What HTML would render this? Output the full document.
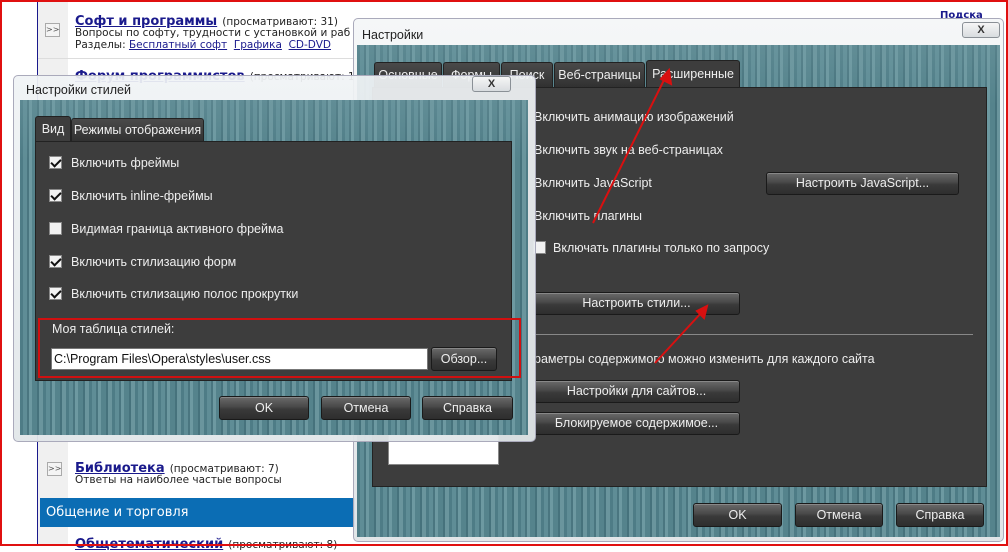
<!DOCTYPE html>
<html><head><meta charset="utf-8"><style>
*{box-sizing:border-box;margin:0;padding:0}
body{width:1008px;height:546px;overflow:hidden;position:relative;background:#fff;font-family:"DejaVu Sans","Liberation Sans",sans-serif;}
.a{position:absolute}
.frame{position:absolute;inset:0;border:2px solid #e01010;z-index:50;pointer-events:none}
.lnk{color:#1a1a8c;text-decoration:underline;font-weight:bold;font-size:13px}
.sm{font-size:10.5px;color:#222}
.arr{width:15px;height:14px;border:1px solid #aaa;background:#f4f4f4;font-size:8px;color:#555;text-align:center;line-height:12px}
.stripe{background:linear-gradient(rgba(120,160,168,.35),rgba(0,0,0,0) 60px),repeating-linear-gradient(90deg,#4e7c86 0 3px,#5f8d96 3px 7px,#4a7680 7px 9px,#6d99a1 9px 12px,#55838c 12px 17px,#46727c 17px 19px,#6a959d 19px 23px)}
.title{background:linear-gradient(#f4f6f7,#dfe4e7);color:#222;font-family:"Liberation Sans",sans-serif;font-size:12.5px}
.dark{background:#3d3d3d;border:1px solid #222}
.t{position:absolute;color:#eee;font-family:"Liberation Sans",sans-serif;font-size:12.5px;white-space:nowrap}
.btn{position:absolute;background:linear-gradient(#6a6a6a,#484848 45%,#3a3a3a 55%,#2e2e2e);border:1px solid #1a1a1a;border-radius:3px;color:#eee;font-family:"Liberation Sans",sans-serif;font-size:12.5px;text-align:center;box-shadow:inset 0 1px 0 #888}
.tab{position:absolute;background:linear-gradient(#4a4a4a,#303030);border:1px solid #222;border-bottom:none;border-radius:3px 3px 0 0;color:#eee;font-family:"Liberation Sans",sans-serif;font-size:12.5px;text-align:center;line-height:24px}
.cb{position:absolute;width:13px;height:13px;background:#f2f2f2;border:1px solid #888}
.cb.k::after{content:"";position:absolute;left:3px;top:0px;width:4px;height:8px;border:solid #111;border-width:0 2px 2px 0;transform:rotate(45deg)}
.x{position:absolute;border:1px solid #8a9096;border-radius:3px;background:linear-gradient(#f6f6f6,#d8dcdf);font-size:11px;font-weight:bold;text-align:center;color:#333;font-family:"Liberation Sans",sans-serif}
</style></head><body>
<div class="a" style="left:37px;top:0;width:1px;height:546px;background:#1a1a8c"></div>
<div class="a" style="left:38px;top:0;width:30px;height:546px;background:#f0f0f0"></div>
<div class="a arr" style="left:45px;top:23px">&gt;&gt;</div>
<div class="a" style="left:75px;top:10px"><span class="lnk">Софт и программы</span> <span class="sm">(просматривают: 31)</span></div>
<div class="a sm" style="left:75px;top:27px">Вопросы по софту, трудности с установкой и раб</div>
<div class="a sm" style="left:75px;top:39px">Разделы: <u style="color:#1a1a8c">Бесплатный софт</u> &nbsp;<u style="color:#1a1a8c">Графика</u> &nbsp;<u style="color:#1a1a8c">CD-DVD</u></div>
<div class="a" style="left:38px;top:58px;width:320px;height:1px;background:#ddd"></div>
<div class="a" style="left:75px;top:65px"><span class="lnk">Форум программистов</span> <span class="sm">(просматривают: 1</span></div>
<div class="a arr" style="left:47px;top:462px">&gt;&gt;</div>
<div class="a" style="left:75px;top:457px"><span class="lnk">Библиотека</span> <span class="sm">(просматривают: 7)</span></div>
<div class="a sm" style="left:75px;top:474px">Ответы на наиболее частые вопросы</div>
<div class="a" style="left:40px;top:498px;width:315px;height:29px;background:#0b6db4;color:#fff;font-size:13px;line-height:29px;padding-left:6px">Общение и торговля</div>
<div class="a" style="left:75px;top:533px"><span class="lnk">Общетематический</span> <span class="sm">(просматривают: 8)</span></div>
<div class="a" style="left:940px;top:10px;font-size:10px;color:#1a1a8c;font-weight:bold">Подска</div>

<div class="a title" style="left:353px;top:18px;width:651px;height:524px;border:1px solid #aab;border-radius:5px;padding:9px 8px;background:linear-gradient(rgba(244,246,247,.9),rgba(223,228,231,.95))">Настройки</div>
<div class="x" style="left:962px;top:22px;width:38px;height:16px;line-height:14px">X</div>
<div class="a stripe" style="left:357px;top:45px;width:643px;height:492px"></div>
<div class="tab" style="left:374px;top:62px;width:68px;height:26px">Основные</div>
<div class="tab" style="left:443px;top:62px;width:57px;height:26px">Формы</div>
<div class="tab" style="left:501px;top:62px;width:52px;height:26px">Поиск</div>
<div class="tab" style="left:554px;top:62px;width:91px;height:26px">Веб-страницы</div>
<div class="tab" style="left:646px;top:60px;width:94px;height:28px;background:#3d3d3d;line-height:26px">Расширенные</div>
<div class="a dark" style="left:372px;top:87px;width:615px;height:400px"></div>
<div class="t" style="left:534px;top:110px">Включить анимацию изображений</div>
<div class="t" style="left:534px;top:143px">Включить звук на веб-страницах</div>
<div class="t" style="left:534px;top:176px">Включить JavaScript</div>
<div class="btn" style="left:766px;top:172px;width:193px;height:23px;line-height:21px">Настроить JavaScript...</div>
<div class="t" style="left:534px;top:209px">Включить плагины</div>
<div class="cb" style="left:533px;top:241px"></div>
<div class="t" style="left:553px;top:241px">Включать плагины только по запросу</div>
<div class="btn" style="left:533px;top:292px;width:207px;height:23px;line-height:21px">Настроить стили...</div>
<div class="a" style="left:533px;top:334px;width:440px;height:1px;background:#888"></div>
<div class="t" style="left:534px;top:352px">раметры содержимого можно изменить для каждого сайта</div>
<div class="btn" style="left:533px;top:380px;width:207px;height:23px;line-height:21px">Настройки для сайтов...</div>
<div class="btn" style="left:533px;top:412px;width:207px;height:23px;line-height:21px">Блокируемое содержимое...</div>
<div class="a" style="left:388px;top:430px;width:111px;height:35px;background:#fff;border:1px solid #888"></div>
<div class="btn" style="left:693px;top:503px;width:89px;height:24px;line-height:22px">OK</div>
<div class="btn" style="left:795px;top:503px;width:88px;height:24px;line-height:22px">Отмена</div>
<div class="btn" style="left:896px;top:503px;width:88px;height:24px;line-height:22px">Справка</div>

<div class="a title" style="left:13px;top:75px;width:523px;height:367px;border:1px solid #aab;border-radius:5px;padding:7px 12px;background:linear-gradient(rgba(240,243,245,.93),rgba(225,230,233,.95))">Настройки стилей</div>
<div class="x" style="left:472px;top:76px;width:39px;height:16px;line-height:14px">X</div>
<div class="a stripe" style="left:20px;top:100px;width:508px;height:335px"></div>
<div class="tab" style="left:35px;top:116px;width:36px;height:26px;background:#3d3d3d">Вид</div>
<div class="tab" style="left:71px;top:118px;width:133px;height:24px;line-height:22px">Режимы отображения</div>
<div class="a dark" style="left:35px;top:141px;width:477px;height:240px"></div>
<div class="cb k" style="left:49px;top:156px"></div><div class="t" style="left:71px;top:156px">Включить фреймы</div>
<div class="cb k" style="left:49px;top:189px"></div><div class="t" style="left:71px;top:189px">Включить inline-фреймы</div>
<div class="cb" style="left:49px;top:222px"></div><div class="t" style="left:71px;top:222px">Видимая граница активного фрейма</div>
<div class="cb k" style="left:49px;top:255px"></div><div class="t" style="left:71px;top:255px">Включить стилизацию форм</div>
<div class="cb k" style="left:49px;top:287px"></div><div class="t" style="left:71px;top:287px">Включить стилизацию полос прокрутки</div>
<div class="t" style="left:52px;top:322px">Моя таблица стилей:</div>
<div class="a" style="left:51px;top:348px;width:377px;height:22px;background:#fff;border:1px solid #777;font-family:'Liberation Sans',sans-serif;font-size:12.5px;line-height:20px;padding-left:2px;color:#111">C:\Program Files\Opera\styles\user.css</div>
<div class="btn" style="left:431px;top:347px;width:66px;height:24px;line-height:22px">Обзор...</div>
<div class="a" style="left:38px;top:318px;width:483px;height:60px;border:2px solid #d01010"></div>
<div class="btn" style="left:219px;top:396px;width:90px;height:24px;line-height:22px">OK</div>
<div class="btn" style="left:321px;top:396px;width:90px;height:24px;line-height:22px">Отмена</div>
<div class="btn" style="left:422px;top:396px;width:91px;height:24px;line-height:22px">Справка</div>

<svg class="a" style="left:0;top:0;z-index:40" width="1008" height="546">
<g stroke="#d81010" stroke-width="2" fill="#d81010">
<line x1="593" y1="223" x2="666" y2="76"/>
<polygon points="669,70 671,84 661,79"/>
<line x1="655" y1="363" x2="702" y2="312"/>
<polygon points="707,306 704,318 697,311"/>
</g></svg>
<div class="frame"></div>
</body></html>
